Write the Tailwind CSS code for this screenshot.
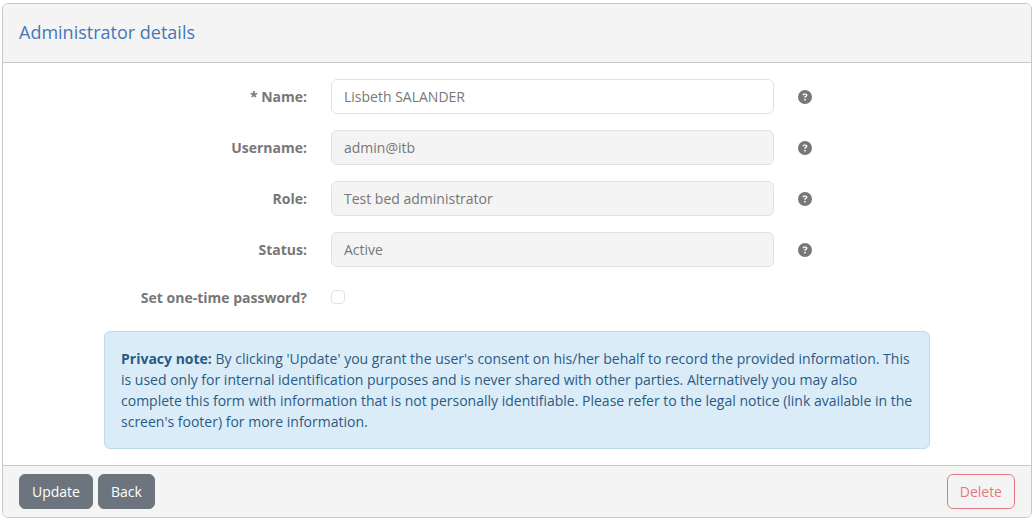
<!DOCTYPE html>
<html lang="en">
<head>
  <meta charset="UTF-8">
  <meta name="viewport" content="width=device-width, initial-scale=1.0">
  <title>Administrator details</title>
  <script src="https://cdn.jsdelivr.net/npm/@tailwindcss/browser@4"></script>
</head>
<body class="bg-white px-[2px] py-[3px] font-['Open_Sans',sans-serif] text-sm/[21px] text-[#777777]">
  <svg class="hidden">
    <symbol id="help" viewBox="0 0 512 512">
      <path fill="currentColor" d="M256 512A256 256 0 1 0 256 0a256 256 0 1 0 0 512zM169.8 165.3c7.9-22.3 29.1-37.3 52.8-37.3h58.3c34.9 0 63.1 28.3 63.1 63.1c0 22.6-12.1 43.5-31.7 54.8L280 264.4c-.2 13-10.9 23.6-24 23.6c-13.3 0-24-10.7-24-24V250.5c0-8.6 4.6-16.5 12.1-20.8l44.3-25.4c4.7-2.7 7.6-7.7 7.6-13.1c0-8.4-6.8-15.1-15.1-15.1H222.6c-3.4 0-6.4 2.1-7.5 5.3l-.4 1.2c-4.4 12.5-18.2 19-30.6 14.6s-19-18.2-14.6-30.6l.4-1.2zM224 352a32 32 0 1 1 64 0 32 32 0 1 1-64 0z"/>
    </symbol>
  </svg>

  <form class="overflow-hidden rounded-md border border-[#c8c8c8]">
    <header class="border-b border-[#c8c8c8] bg-[#f4f4f4] pt-4 pr-4 pb-[18px] pl-4">
      <h1 class="text-lg/6 text-[#4676b8]">Administrator details</h1>
    </header>

    <main class="px-1 py-4">
      <div class="mx-auto w-10/12 px-3">
        <div class="flex flex-col gap-4">
          <div class="grid grid-cols-[203fr_443fr_132fr] items-center gap-6">
            <label for="name" class="text-right font-bold">* Name:</label>
            <input id="name" type="text" value="Lisbeth SALANDER" class="w-full min-w-0 rounded-md border border-[#dee2e6] bg-white px-3 py-1.5">
            <svg class="size-3.5" role="img" aria-label="Help"><use href="#help"/></svg>
          </div>
          <div class="grid grid-cols-[203fr_443fr_132fr] items-center gap-6">
            <label for="username" class="text-right font-bold">Username:</label>
            <input id="username" type="text" value="admin@itb" readonly class="w-full min-w-0 rounded-md border border-[#dee2e6] bg-[#f4f4f4] px-3 py-1.5">
            <svg class="size-3.5" role="img" aria-label="Help"><use href="#help"/></svg>
          </div>
          <div class="grid grid-cols-[203fr_443fr_132fr] items-center gap-6">
            <label for="role" class="text-right font-bold">Role:</label>
            <input id="role" type="text" value="Test bed administrator" readonly class="w-full min-w-0 rounded-md border border-[#dee2e6] bg-[#f4f4f4] px-3 py-1.5">
            <svg class="size-3.5" role="img" aria-label="Help"><use href="#help"/></svg>
          </div>
          <div class="grid grid-cols-[203fr_443fr_132fr] items-center gap-6">
            <label for="status" class="text-right font-bold">Status:</label>
            <input id="status" type="text" value="Active" readonly class="w-full min-w-0 rounded-md border border-[#dee2e6] bg-[#f4f4f4] px-3 py-1.5">
            <svg class="size-3.5" role="img" aria-label="Help"><use href="#help"/></svg>
          </div>
          <div class="grid min-h-7 grid-cols-[203fr_443fr_132fr] items-center gap-6">
            <label for="oneTime" class="text-right font-bold whitespace-nowrap">Set one-time password?</label>
            <input id="oneTime" type="checkbox" class="size-3.5 appearance-none rounded-[4px] border border-[#dee2e6] bg-white checked:bg-[#4676b8]">
          </div>
        </div>

        <div class="mt-5 rounded-md border border-[#bcdcec] bg-[#daecf8] p-4 text-[#2b5b84]">
          <strong class="font-bold">Privacy note:</strong> By clicking 'Update' you grant the user's consent on his/her behalf to record the provided information. This is used only for internal identification purposes and is never shared with other parties. Alternatively you may also complete this form with information that is not personally identifiable. Please refer to the legal notice (link available in the screen's footer) for more information.
        </div>
      </div>
    </main>

    <footer class="flex items-center justify-between border-t border-[#c8c8c8] bg-[#f4f4f4] px-4 py-2">
      <div class="flex gap-[5px]">
        <button type="submit" class="rounded-md border border-[#6c757d] bg-[#6c757d] px-3 py-1.5 text-white hover:bg-[#5c636a]">Update</button>
        <button type="button" class="rounded-md border border-[#6c757d] bg-[#6c757d] px-3 py-1.5 text-white hover:bg-[#5c636a]">Back</button>
      </div>
      <button type="button" disabled class="rounded-md border border-[#dc3545] px-3 py-1.5 text-[#dc3545] opacity-65">Delete</button>
    </footer>
  </form>
</body>
</html>
